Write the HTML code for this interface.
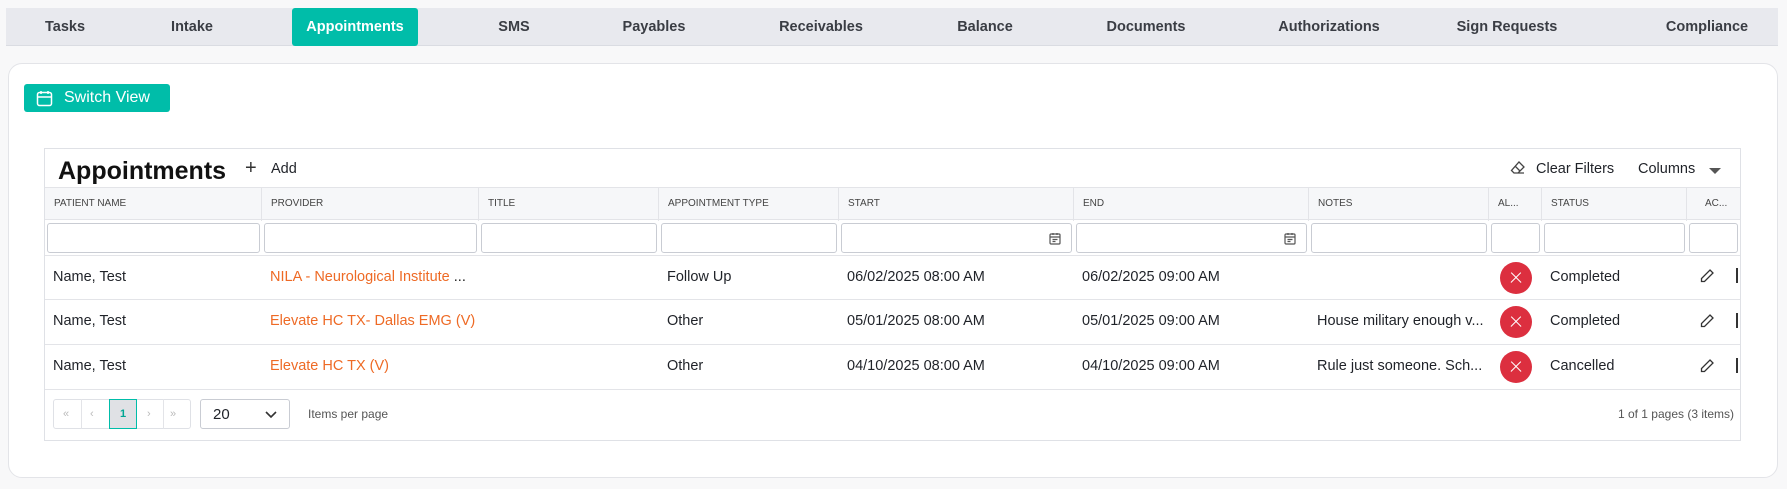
<!DOCTYPE html>
<html><head><style>
*{box-sizing:border-box;margin:0;padding:0}
body{width:1787px;height:489px;background:#f8f8f9;font-family:"Liberation Sans",sans-serif;color:#1f2228;position:relative;overflow:hidden}
.nav{position:absolute;left:6px;right:9px;top:8px;height:38px;background:#e8e9ee;border-bottom:1px solid #dadce2}
.tab{position:absolute;top:0;height:38px;line-height:38px;font-weight:bold;font-size:14.5px;color:#3a3d44;transform:translateX(-50%);white-space:nowrap}
.tab.act{background:#00bda9;color:#fff;border-radius:3px;width:126px;text-align:center}
.card{position:absolute;left:8px;top:63px;width:1770px;height:415px;background:#fff;border:1px solid #e3e4e8;border-radius:14px}
.sw{position:absolute;left:24px;top:84px;width:146px;height:28px;background:#00bda9;border-radius:3px;color:#fff;font-size:16px;line-height:28px;padding-left:40px}
.tbl{position:absolute;left:44px;top:148px;width:1697px;height:293px;border:1px solid #dfe1e6;background:#fff}
.abs{position:absolute}
.title{left:13px;top:8px;font-size:25px;font-weight:bold;color:#111}
.hdr{position:absolute;left:0;top:38px;width:1695px;height:33px;background:#f6f7f9;border-top:1px solid #e3e4e8;border-bottom:1px solid #e3e4e8}
.hl{position:absolute;top:0;height:33px;line-height:31px;font-size:10px;color:#444;padding-left:9px;border-right:1px solid #e3e4e8}
.fi{position:absolute;top:74px;height:30px;border:1px solid #c9ccd3;border-radius:3px;background:#fff}
.row{position:absolute;left:0;width:1695px;border-bottom:1px solid #e3e4e8}
.c{position:absolute;font-size:14.5px;white-space:nowrap}
.or{color:#ee6a25}
.x{position:absolute;width:32px;height:32px;border-radius:50%;background:#dc2f3f}
.x:before,.x:after{content:"";position:absolute;left:9px;top:15px;width:14px;height:1.4px;background:#fff;transform:rotate(45deg)}
.x:after{transform:rotate(-45deg)}
</style></head><body>
<div class="nav">
<div class="tab" style="left:59px">Tasks</div>
<div class="tab" style="left:186px">Intake</div>
<div class="tab act" style="left:349px">Appointments</div>
<div class="tab" style="left:508px">SMS</div>
<div class="tab" style="left:648px">Payables</div>
<div class="tab" style="left:815px">Receivables</div>
<div class="tab" style="left:979px">Balance</div>
<div class="tab" style="left:1140px">Documents</div>
<div class="tab" style="left:1323px">Authorizations</div>
<div class="tab" style="left:1501px">Sign Requests</div>
<div class="tab" style="left:1701px">Compliance</div>
</div>
<div class="card"></div>
<div class="sw"><svg class="abs" style="left:12px;top:6px" width="17" height="17" viewBox="0 0 17 17" fill="none" stroke="#fff" stroke-width="1.5"><rect x="1.5" y="2.5" width="14" height="13" rx="2"/><path d="M1.5 7h14M5 1v3M12 1v3"/></svg>Switch View</div>
<div class="tbl">
<div class="abs title">Appointments</div>
<div class="abs" style="left:200px;top:8px;font-size:20px;color:#333">+</div>
<div class="abs" style="left:226px;top:12px;font-size:14.5px">Add</div>
<svg class="abs" style="left:1465px;top:11px" width="16" height="16" viewBox="0 0 16 16" fill="none" stroke="#444" stroke-width="1.3"><path d="M9 2l5 5-6 6H4L1.5 10.5z M5 6l5 5 M4 13h10"/></svg>
<div class="abs" style="left:1491px;top:12px;font-size:14.5px">Clear Filters</div>
<div class="abs" style="left:1593px;top:12px;font-size:14.5px">Columns</div>
<div class="abs" style="left:1664px;top:19px;border:6px solid transparent;border-top:6px solid #555;border-bottom:0"></div>
<div class="hdr">
<div class="hl" style="left:0;width:217px">PATIENT NAME</div>
<div class="hl" style="left:217px;width:217px">PROVIDER</div>
<div class="hl" style="left:434px;width:180px">TITLE</div>
<div class="hl" style="left:614px;width:180px">APPOINTMENT TYPE</div>
<div class="hl" style="left:794px;width:235px">START</div>
<div class="hl" style="left:1029px;width:235px">END</div>
<div class="hl" style="left:1264px;width:180px">NOTES</div>
<div class="hl" style="left:1444px;width:53px">AL...</div>
<div class="hl" style="left:1497px;width:145px">STATUS</div>
<div class="hl" style="left:1642px;width:53px;border:0;padding-left:18px">AC...</div>
</div>
<div class="fi" style="left:2px;width:213px"></div>
<div class="fi" style="left:219px;width:213px"></div>
<div class="fi" style="left:436px;width:176px"></div>
<div class="fi" style="left:616px;width:176px"></div>
<div class="fi" style="left:796px;width:231px"><svg class="abs" style="right:10px;top:8px" width="12" height="13" viewBox="0 0 12 13" fill="none" stroke="#555" stroke-width="1.2"><rect x="1" y="2" width="10" height="10" rx="1"/><path d="M1 5h10M4 1v2M8 1v2M3.5 7.5h5M3.5 9.5h3"/></svg></div>
<div class="fi" style="left:1031px;width:231px"><svg class="abs" style="right:10px;top:8px" width="12" height="13" viewBox="0 0 12 13" fill="none" stroke="#555" stroke-width="1.2"><rect x="1" y="2" width="10" height="10" rx="1"/><path d="M1 5h10M4 1v2M8 1v2M3.5 7.5h5M3.5 9.5h3"/></svg></div>
<div class="fi" style="left:1266px;width:176px"></div>
<div class="fi" style="left:1446px;width:49px"></div>
<div class="fi" style="left:1499px;width:141px"></div>
<div class="fi" style="left:1644px;width:49px"></div>
<div class="row" style="top:106px;height:45px;border-top:1px solid #e3e4e8">
<div class="c" style="left:8px;top:13px">Name, Test</div><div class="c or" style="left:225px;top:13px">NILA - Neurological Institute <span style="color:#222">...</span></div>
<div class="c" style="left:622px;top:13px">Follow Up</div><div class="c" style="left:802px;top:13px">06/02/2025 08:00 AM</div><div class="c" style="left:1037px;top:13px">06/02/2025 09:00 AM</div>
<div class="x" style="left:1455px;top:6px"></div><div class="c" style="left:1505px;top:13px">Completed</div>
</div>
<div class="row" style="top:151px;height:45px">
<div class="c" style="left:8px;top:13px">Name, Test</div><div class="c or" style="left:225px;top:13px">Elevate HC TX- Dallas EMG (V)</div>
<div class="c" style="left:622px;top:13px">Other</div><div class="c" style="left:802px;top:13px">05/01/2025 08:00 AM</div><div class="c" style="left:1037px;top:13px">05/01/2025 09:00 AM</div>
<div class="c" style="left:1272px;top:13px">House military enough v...</div>
<div class="x" style="left:1455px;top:6px"></div><div class="c" style="left:1505px;top:13px">Completed</div>
</div>
<div class="row" style="top:196px;height:45px">
<div class="c" style="left:8px;top:13px">Name, Test</div><div class="c or" style="left:225px;top:13px">Elevate HC TX (V)</div>
<div class="c" style="left:622px;top:13px">Other</div><div class="c" style="left:802px;top:13px">04/10/2025 08:00 AM</div><div class="c" style="left:1037px;top:13px">04/10/2025 09:00 AM</div>
<div class="c" style="left:1272px;top:13px">Rule just someone. Sch...</div>
<div class="x" style="left:1455px;top:6px"></div><div class="c" style="left:1505px;top:13px">Cancelled</div>
</div>
<svg class="abs" style="left:1654px;top:119px" width="16" height="16" viewBox="0 0 16 16" fill="none" stroke="#333" stroke-width="1.3"><path d="M11 2l3 3-8.5 8.5H2.5v-3z"/></svg>
<svg class="abs" style="left:1654px;top:164px" width="16" height="16" viewBox="0 0 16 16" fill="none" stroke="#333" stroke-width="1.3"><path d="M11 2l3 3-8.5 8.5H2.5v-3z"/></svg>
<svg class="abs" style="left:1654px;top:209px" width="16" height="16" viewBox="0 0 16 16" fill="none" stroke="#333" stroke-width="1.3"><path d="M11 2l3 3-8.5 8.5H2.5v-3z"/></svg>
<div class="abs" style="left:1691px;top:119px;width:2px;height:15px;background:#333"></div>
<div class="abs" style="left:1691px;top:164px;width:2px;height:15px;background:#333"></div>
<div class="abs" style="left:1691px;top:209px;width:2px;height:15px;background:#333"></div>
<div class="abs" style="left:8px;top:250px;width:138px;height:30px;border:1px solid #dfe1e6;border-radius:3px;font-size:11px;color:#bbb">
<span class="abs" style="left:9px;top:8px">«</span><span class="abs" style="left:36px;top:8px">‹</span>
<span class="abs" style="left:27px;top:-1px;width:0;height:30px;border-left:1px solid #e3e4e8"></span>
<span class="abs" style="left:55px;top:-1px;width:28px;height:30px;border:1px solid #00bda9;background:#e0e1e5;color:#00a593;font-weight:bold;text-align:center;line-height:28px">1</span>
<span class="abs" style="left:93px;top:8px">›</span><span class="abs" style="left:116px;top:8px">»</span>
<span class="abs" style="left:109px;top:-1px;width:0;height:30px;border-left:1px solid #e3e4e8"></span>
</div>
<div class="abs" style="left:155px;top:250px;width:90px;height:30px;border:1px solid #c9ccd3;border-radius:3px;font-size:15px;padding:6px 0 0 12px">20<svg class="abs" style="left:64px;top:11px" width="12" height="8" viewBox="0 0 12 8" fill="none" stroke="#333" stroke-width="1.6"><path d="M1 1l5 5 5-5"/></svg></div>
<div class="abs" style="left:263px;top:258px;font-size:12px;color:#555">Items per page</div>
<div class="abs" style="right:6px;top:258px;font-size:12px;color:#555">1 of 1 pages (3 items)</div>
</div>
</body></html>
